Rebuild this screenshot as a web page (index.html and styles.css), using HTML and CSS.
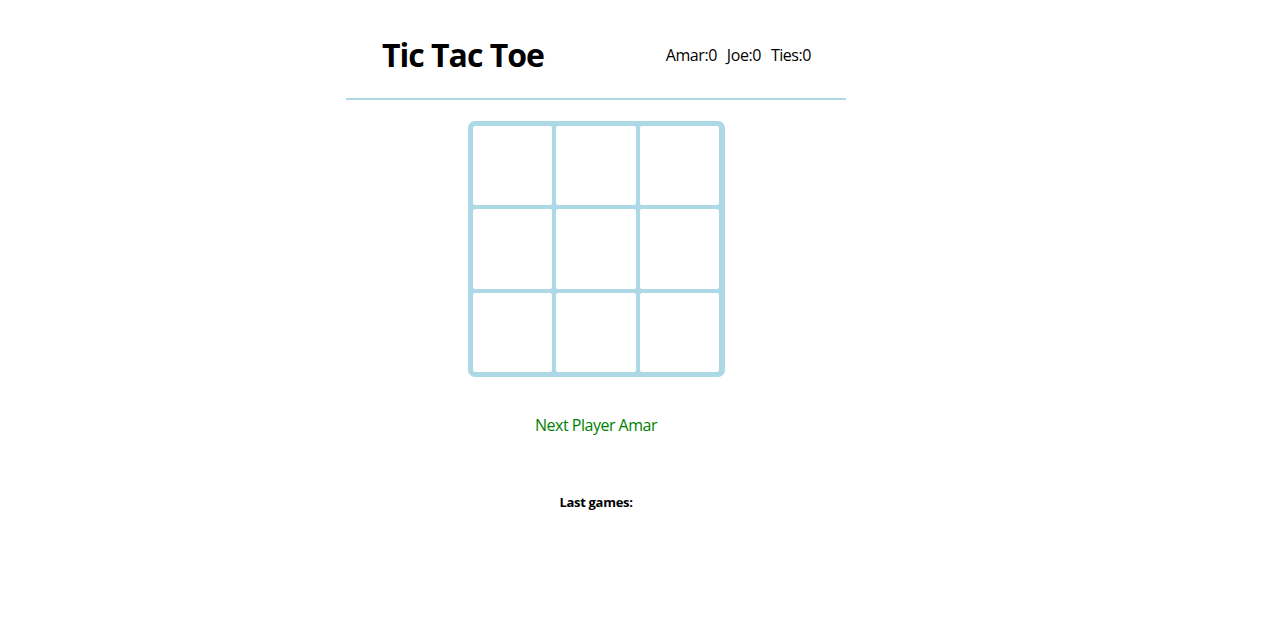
FILE: index.html
```html
<!DOCTYPE html>
<html>
<head>
<meta charset="utf-8">
<link rel="stylesheet" href="styles.css">
</head>
<body>
<div class="app">
  <header class="header">
    <h1 class="title">Tic Tac Toe</h1>
    <div class="scores">
      <span class="score">Amar:0</span>
      <span class="score">Joe:0</span>
      <span class="score">Ties:0</span>
    </div>
  </header>
  <div class="board">
    <div class="cell"></div><div class="cell"></div><div class="cell"></div>
    <div class="cell"></div><div class="cell"></div><div class="cell"></div>
    <div class="cell"></div><div class="cell"></div><div class="cell"></div>
  </div>
  <p class="status">Next Player Amar</p>
  <h4 class="history-title">Last games:</h4>
</div>
</body>
</html>
```

FILE: styles.css
```css
html, body {
  margin: 0;
  padding: 0;
  background: #ffffff;
}

body {
  font-family: "Open Sans", "Noto Sans", sans-serif;
  color: #000;
}

.app {
  width: 500px;
  margin-left: 346px;
  display: flex;
  flex-direction: column;
  align-items: center;
}

.header {
  box-sizing: border-box;
  width: 100%;
  height: 100px;
  padding: 12px 35px 0 36px;
  display: flex;
  justify-content: space-between;
  align-items: center;
  border-bottom: 2px solid #add8e6;
}

.title {
  margin: 0;
  font-size: 32px;
  font-weight: 700;
  line-height: 1.2;
  letter-spacing: -1px;
}

.scores {
  display: flex;
  gap: 10px;
  font-size: 16px;
  letter-spacing: -0.45px;
}

.board {
  margin-top: 21px;
  width: 257px;
  height: 256px;
  box-sizing: border-box;
  border: 5px solid #add8e6;
  border-radius: 7px;
  background: #add8e6;
  display: grid;
  grid-template-columns: repeat(3, 1fr);
  grid-template-rows: repeat(3, 1fr);
  gap: 4px;
}

.cell {
  background: #ffffff;
  border-radius: 2px;
}

.status {
  margin: 37px 0 0;
  font-size: 16px;
  color: #008000;
  line-height: 22px;
  letter-spacing: -0.5px;
}

.history-title {
  margin: 57px 0 0;
  font-size: 13px;
  font-weight: 700;
  line-height: 18px;
  letter-spacing: -0.3px;
}
```
